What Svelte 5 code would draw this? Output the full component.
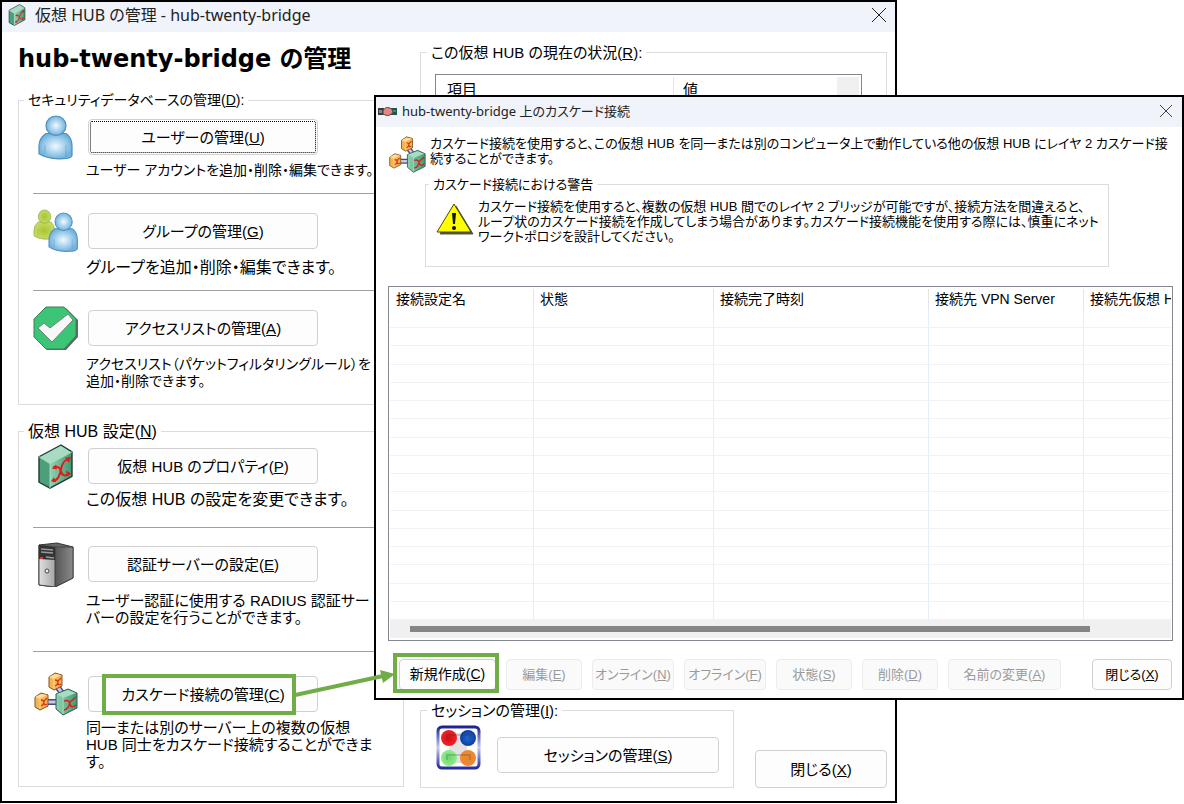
<script>
    // label + access key (underlined) for every button
    const security = [
        { icon: "user", label: "ユーザーの管理", key: "U", focus: true, lines: ["ユーザー アカウントを追加・削除・編集できます。"] },
        { icon: "group", label: "グループの管理", key: "G", lines: ["グループを追加・削除・編集できます。"] },
        { icon: "check", label: "アクセスリストの管理", key: "A", lines: ["アクセスリスト（パケットフィルタリングルール）を", "追加・削除できます。"] },
    ];

    const settings = [
        { icon: "hub", label: "仮想 HUB のプロパティ", key: "P", lines: ["この仮想 HUB の設定を変更できます。"] },
        { icon: "server", label: "認証サーバーの設定", key: "E", lines: ["ユーザー認証に使用する RADIUS 認証サー", "バーの設定を行うことができます。"] },
        { icon: "cascade", label: "カスケード接続の管理", key: "C", marked: true, lines: ["同一または別のサーバー上の複数の仮想", "HUB 同士をカスケード接続することができま", "す。"] },
    ];

    const columns = ["接続設定名", "状態", "接続完了時刻", "接続先 VPN Server", "接続先仮想 HUB"];
    const rows = Array(17).fill(0);

    const actions = [
        { label: "編集", key: "E", size: "small" },
        { label: "オンライン", key: "N", size: "medium" },
        { label: "オフライン", key: "F", size: "medium" },
        { label: "状態", key: "S", size: "small" },
        { label: "削除", key: "D", size: "small" },
        { label: "名前の変更", key: "A", size: "large" },
    ];
</script>

{#snippet accel(label, key)}{label}(<u>{key}</u>){/snippet}

{#snippet cube(fill, top, side)}
    <g stroke-linejoin="round">
        <path d="M0 12 22 0 33 7 11 19Z" fill={top} />
        <path d="M0 12 11 19V44L0 38Z" fill={side} />
        <path d="M11 19 33 7V32L11 44Z" fill={fill} />
        <path d="M0 12 22 0 33 7V32L11 44 0 38Z" fill="none" stroke="#1d3b31" stroke-width="1.4" />
        <path d="M0 12 11 19 33 7M11 19V44" fill="none" stroke="#a9d8c1" stroke-width="1" />
        <path d="M14 23Q20 20 22 27T31 29M14 37Q20 36 22 25T30 15" fill="none" stroke="#e3191c" stroke-width="2" />
        <path d="M26 13 32 12 30 18ZM27 26 32 29 28 32ZM13 24 17 20 18 25ZM12 37 15 33 17 38Z" fill="#e3191c" />
    </g>
{/snippet}

{#snippet person(fill, line)}
    <g {fill} stroke={line} stroke-width="1.2">
        <path d="M7 18Q0 23 0 31V39Q9 45 24 44 31 44 33 41V31Q33 22 27 18Z" />
        <circle cx="17" cy="10" r="10" />
        <path d="M6 30V39M27 30V42" fill="none" opacity=".4" />
    </g>
{/snippet}

{#snippet orangeNode()}
    <g stroke-linejoin="round">
        <path d="M1 4 7 0 14 2V13L6 17 1 14Z" fill="#f8b44e" stroke="#7a5424" />
        <path d="M1 4 7 1 13 2 6 6Z" fill="#ffdc9a" />
        <path d="M6 6V16" stroke="#fbd795" />
        <path d="M7 7Q10 7 10 10T13 11M7 13Q10 12 10 8L13 5" fill="none" stroke="#d9341c" stroke-width="1.3" />
    </g>
{/snippet}

{#snippet icon(name)}
    <svg class="icon" viewBox="0 0 45 45" aria-hidden="true">
        {#if name === "user"}
            <g transform="translate(6 1) scale(1 .97)">{@render person("url(#blue)", "#4f8fb9")}</g>
        {:else if name === "group"}
            <g transform="translate(1 1) scale(.62 .66)">{@render person("url(#lime)", "#93ad39")}</g>
            <g transform="translate(16 4) scale(.86 .87)">{@render person("url(#blue)", "#4f8fb9")}</g>
        {:else if name === "check"}
            <path d="M14 2H33L45 14V31L33 44H14L3 32V13Z" fill="#666" />
            <path d="M13 1H31L43 13V30L31 43H13L1 31V13Z" fill="#3dc577" stroke="#3e7d5b" />
            <path d="M5 22 11 17 17 22 35 8 40 14 19 36Z" fill="#f7f7f7" stroke="#6a8577" />
        {:else if name === "hub"}
            <g transform="translate(6 1) scale(1 .98)">{@render cube("url(#green)", "#a8dcc2", "#4c9f7b")}</g>
        {:else if name === "server"}
            <path d="M6 3 24 1 40 5V36L22 45 6 43Z" fill="#666" stroke="#333" />
            <path d="M22 5 40 5V36L22 45Z" fill="url(#dark)" stroke="#444" />
            <path d="M6 3 22 5V45L6 43Z" fill="url(#steel)" stroke="#444" />
            <path d="M6 3 22 5V18L6 17Z" fill="#333" />
            <path d="M8 7 20 8M8 10 20 11M13 15 21 16" stroke="#999" stroke-width="1.3" />
            <path d="M7 16H10" stroke="#d33" stroke-width="2" />
            <circle cx="14" cy="29" r="2" fill="#eee" stroke="#444" />
        {:else if name === "cascade"}
            <path d="M23 13 32 25M14 30H26" stroke="#494982" stroke-width="6" />
            <path d="M23 13 32 25M14 30H26" stroke="#c7c8e8" stroke-width="3" />
            <g transform="translate(15 1)">{@render orangeNode()}</g>
            <g transform="translate(1 21)">{@render orangeNode()}</g>
            <path d="M23 22 35 17 44 21V36L30 43 23 37Z" fill="url(#green)" stroke="#2c5d48" stroke-linejoin="round" />
            <path d="M24 22 35 18 43 21 30 26Z" fill="#a8dcc2" />
            <path d="M30 26V42" stroke="#a8dcc2" />
            <path d="M31 29Q36 27 37 32T43 33M31 38Q36 37 37 30L43 25" fill="none" stroke="#d2231c" stroke-width="1.6" />
        {:else if name === "session"}
            <rect x="2" y="2" width="41" height="41" rx="4" fill="#fff" stroke="url(#navy)" stroke-width="3" />
            <path d="M13 8H31V38H13Z" fill="#e2e2e2" />
            <circle cx="13" cy="13" r="8" fill="url(#red)" />
            <circle cx="32" cy="13" r="8" fill="url(#ball)" />
            <circle cx="13" cy="33" r="8" fill="url(#leaf)" />
            <circle cx="32" cy="33" r="8" fill="url(#orange)" />
            <path d="M11 15V10H34V15M11 35V30H34V35" fill="none" stroke="#333" stroke-opacity=".2" stroke-width="2" />
        {/if}
    </svg>
{/snippet}

{#snippet item(it)}
    <div class={["item", it.icon]}>
        {@render icon(it.icon)}
        <span class="holder">
            <button class="btn" class:focus={it.focus}>{@render accel(it.label, it.key)}</button>
            {#if it.marked}<span class="mark"></span>{/if}
        </span>
        <p>{#each it.lines as line, i}{#if i}<br />{/if}{line}{/each}</p>
    </div>
{/snippet}

<svg class="defs" width="0" height="0" aria-hidden="true">
    <defs>
        <radialGradient id="blue"><stop offset="0" stop-color="#f0f9ff" /><stop offset="1" stop-color="#72b4df" /></radialGradient>
        <radialGradient id="lime"><stop offset="0" stop-color="#a9c52e" /><stop offset="1" stop-color="#c5db68" /></radialGradient>
        <radialGradient id="red"><stop offset="0" stop-color="#c11" /><stop offset="1" stop-color="#f4202a" /></radialGradient>
        <radialGradient id="ball"><stop offset="0" stop-color="#1b6ad6" /><stop offset="1" stop-color="#123c9c" /></radialGradient>
        <radialGradient id="leaf"><stop offset="0" stop-color="#6fd56b" /><stop offset="1" stop-color="#8fee8b" /></radialGradient>
        <radialGradient id="orange"><stop offset="0" stop-color="#e08a2c" /><stop offset="1" stop-color="#f58634" /></radialGradient>
        <linearGradient id="green"><stop offset="0" stop-color="#8fd3b3" /><stop offset="1" stop-color="#3f9871" /></linearGradient>
        <linearGradient id="dark"><stop offset="0" stop-color="#555" /><stop offset="1" stop-color="#8a8a8a" /></linearGradient>
        <linearGradient id="steel"><stop offset="0" stop-color="#e0e0e0" /><stop offset="1" stop-color="#a5a5a5" /></linearGradient>
        <linearGradient id="navy" x2="0" y2="1"><stop offset="0" stop-color="#1c2290" /><stop offset=".5" stop-color="#c6cbf2" /><stop offset="1" stop-color="#262c9c" /></linearGradient>
    </defs>
</svg>

<div class="desktop">
    <main class="window manager">
        <header class="titlebar">
            <svg class="hub-small" viewBox="-1 -1 35 46" aria-hidden="true">{@render cube("url(#green)", "#a8dcc2", "#4c9f7b")}</svg>
            <span class="caption">仮想 HUB の管理 - hub-twenty-bridge</span>
            <button class="close" aria-label="閉じる">
                <svg viewBox="0 0 14 14"><path d="M0 0 14 14M14 0 0 14" /></svg>
            </button>
        </header>

        <div class="content">
            <div class="left">
                <h1>hub-twenty-bridge の管理</h1>
                <fieldset class="security">
                    <legend>{@render accel("セキュリティデータベースの管理", "D")}:</legend>
                    {#each security as it}{@render item(it)}{/each}
                </fieldset>
                <fieldset class="settings">
                    <legend>{@render accel("仮想 HUB 設定", "N")}</legend>
                    {#each settings as it}{@render item(it)}{/each}
                </fieldset>
            </div>

            <div class="right">
                <fieldset class="status">
                    <legend>{@render accel("この仮想 HUB の現在の状況", "R")}:</legend>
                    <div class="status-list">
                        <table>
                            <thead><tr><th>項目</th><th>値</th></tr></thead>
                        </table>
                        <div class="vbar"></div>
                    </div>
                </fieldset>
                <div class="bottom">
                    <fieldset class="session">
                        <legend>{@render accel("セッションの管理", "I")}:</legend>
                        {@render icon("session")}
                        <button class="btn">{@render accel("セッションの管理", "S")}</button>
                    </fieldset>
                    <button class="btn exit">{@render accel("閉じる", "X")}</button>
                </div>
            </div>
        </div>
    </main>

    <section class="window dialog">
        <header class="titlebar">
            <svg class="link-small" viewBox="0 0 19 9" aria-hidden="true">
                <path d="M0 1H6V8H0Z" fill="#3b3b3b" />
                <path d="M13 1H19V8H13Z" fill="#155b50" />
                <path d="M1 3H4V6H1Z" fill="#7d8a92" />
                <path d="M5 3 9 0 14 2 15 6 10 9 5 7Z" fill="#d98c86" stroke="#7f3434" />
                <path d="M15 3H18V5H15Z" fill="#1f9d74" />
            </svg>
            <span class="caption">hub-twenty-bridge 上のカスケード接続</span>
            <button class="close" aria-label="閉じる">
                <svg viewBox="0 0 14 14"><path d="M0 0 14 14M14 0 0 14" /></svg>
            </button>
        </header>

        <div class="intro">
            {@render icon("cascade")}
            <p>カスケード接続を使用すると、この仮想 HUB を同一または別のコンピュータ上で動作している他の仮想 HUB にレイヤ 2 カスケード接<br />続することができます。</p>
        </div>

        <fieldset class="warning">
            <legend>カスケード接続における警告</legend>
            <svg viewBox="0 0 38 32" aria-hidden="true">
                <path d="M20 3 37 31H4Z" fill="#555" stroke="#555" stroke-width="1" stroke-linejoin="round" />
                <path d="M18 1 35 29H1Z" fill="#ff0" stroke="#4a4a00" stroke-linejoin="round" />
                <path d="M16 10H20L19 21H17Z" fill="#111" />
                <circle cx="18" cy="25" r="2" fill="#111" />
            </svg>
            <p>カスケード接続を使用すると、複数の仮想 HUB 間でのレイヤ 2 ブリッジが可能ですが、接続方法を間違えると、<br />ループ状のカスケード接続を作成してしまう場合があります。カスケード接続機能を使用する際には、慎重にネット<br />ワークトポロジを設計してください。</p>
        </fieldset>

        <div class="list">
            <table>
                <colgroup><col class="c1" /><col class="c2" /><col class="c3" /><col class="c4" /><col /></colgroup>
                <thead><tr>{#each columns as c}<th>{c}</th>{/each}</tr></thead>
                <tbody>
                    {#each rows as _}
                        <tr>{#each columns as _c}<td></td>{/each}</tr>
                    {/each}
                </tbody>
            </table>
            <div class="hbar"><div class="thumb"></div></div>
        </div>

        <footer>
            <span class="holder">
                <button class="btn create">{@render accel("新規作成", "C")}</button>
                <span class="mark"></span>
            </span>
            {#each actions as a}
                <button class={["btn", a.size]} disabled>{@render accel(a.label, a.key)}</button>
            {/each}
            <button class="btn last">{@render accel("閉じる", "X")}</button>
        </footer>
    </section>

    <svg class="arrow" width="100" height="30" viewBox="0 0 100 30" aria-hidden="true">
        <path d="M0 26 88 7" stroke="#70ad47" stroke-width="4" />
        <path d="M85 1 100 5 88 14Z" fill="#70ad47" />
    </svg>
</div>

<style>
    :global(body) {
        background: #fff;
    }

    .desktop {
        position: relative;
        min-height: 804px;
        overflow: hidden;
        color: #000;
        font-family: "Liberation Sans", "Noto Sans CJK JP", sans-serif;
        font-size: 15px;
        line-height: 17px;
        font-feature-settings: "palt";
    }

    .defs {
        position: absolute;
    }

    .window {
        position: absolute;
        box-sizing: border-box;
        background: #fff;
        border: 2px solid #000;
        display: flex;
        flex-direction: column;
    }

    .manager {
        inset: 0 287px 1px 0;
    }

    .dialog {
        top: 95px;
        left: 374px;
        right: 0;
        font-size: 13px;
        line-height: 15px;
    }

    .titlebar {
        box-sizing: border-box;
        display: flex;
        align-items: center;
        height: 30px;
        padding: 0 9px 4px 6px;
        background: #f0f3fa;
        color: #222;
        font-family: "Noto Sans", "Noto Sans CJK JP", sans-serif;
        font-size: 16px;
        white-space: nowrap;
    }

    .caption {
        flex: 1;
    }

    .hub-small {
        width: 18px;
        height: 22px;
        margin-right: 9px;
    }

    .link-small {
        width: 19px;
        height: 9px;
        margin-right: 5px;
    }

    .dialog .titlebar {
        padding: 0 10px 2px 2px;
        font-size: 13px;
    }

    .close {
        border: 0;
        padding: 0;
        background: none;
        display: flex;
    }

    .close svg {
        width: 14px;
        height: 14px;
        fill: none;
        stroke: #222;
    }

    .dialog .close svg {
        width: 12px;
        height: 12px;
    }

    .content {
        flex: 1;
        display: flex;
        gap: 16px;
        padding: 11px 8px 13px 16px;
    }

    .left {
        flex: none;
        width: 386px;
        white-space: nowrap;
    }

    h1 {
        margin: 0 0 17px;
        font-family: "DejaVu Sans", "Noto Sans CJK JP", sans-serif;
        font-size: 24px;
        line-height: 32px;
    }

    fieldset {
        box-sizing: border-box;
        margin: 0;
        padding: 0;
        border: 1px solid #dcdcdc;
        min-width: 0;
    }

    legend {
        margin-left: 6px;
        padding: 0 4px;
    }

    .left fieldset {
        padding-left: 14px;
    }

    .left fieldset + fieldset {
        margin-top: 18px;
    }

    .left legend,
    .session legend {
        margin-left: -9px;
    }

    .security legend {
        font-size: 14px;
    }

    .settings legend {
        font-size: 16px;
    }

    .item {
        display: grid;
        grid-template-columns: 45px auto;
        column-gap: 10px;
        align-items: center;
        padding: 19px 0 14px;
        border-top: 1px solid #a0a0a0;
    }

    .item.user {
        padding-top: 10px;
        border-top: 0;
    }

    .item.hub {
        padding: 8px 0 19px;
        border-top: 0;
    }

    .item.server {
        padding: 18px 0 25px;
    }

    .item.cascade {
        padding: 24px 0 16px;
    }

    .item p {
        grid-column: 2;
        margin: 10px 0 0 -2px;
    }

    .item.user p,
    .item.hub p,
    .item.cascade p {
        margin-top: 7px;
    }

    .item.user p,
    .item.check p {
        font-size: 14px;
    }

    .item.group p,
    .item.hub p {
        font-size: 16px;
    }

    .icon {
        flex: none;
        width: 45px;
        height: 45px;
        margin: -5px 0;
    }

    .holder {
        position: relative;
        display: flex;
    }

    .btn {
        box-sizing: border-box;
        height: 36px;
        padding: 0;
        border: 1px solid #d0d0d0;
        border-radius: 4px;
        background: #fdfdfd;
        color: #000;
        font: inherit;
        font-feature-settings: inherit;
        white-space: nowrap;
    }

    .item .btn {
        width: 230px;
    }

    .btn.focus {
        outline: 1px dotted #000;
        outline-offset: -3px;
    }

    .mark {
        position: absolute;
        box-sizing: border-box;
        border: 4px solid #70ad47;
        pointer-events: none;
    }

    .item .mark {
        left: 14px;
        top: -2px;
        width: 194px;
        height: 41px;
    }

    .right {
        flex: 1;
        display: flex;
        flex-direction: column;
        gap: 14px;
        padding-top: 1px;
    }

    .status {
        flex: 1;
    }

    .status-list {
        display: flex;
        height: 498px;
        margin: 13px 24px 0 14px;
        padding: 2px;
        border: 1px solid #828790;
    }

    .status-list table {
        flex: 1;
        border-collapse: collapse;
        height: 24px;
    }

    .status-list th {
        padding: 0 9px;
        font-weight: normal;
        text-align: left;
    }

    .status-list th:first-child {
        width: 59%;
        border-right: 1px solid #e5e5e5;
    }

    .vbar {
        width: 22px;
        background: #f0f0f0;
    }

    .bottom {
        display: flex;
        align-items: flex-end;
        gap: 21px;
    }

    .session {
        flex: 1;
        display: flex;
        align-items: flex-end;
        gap: 16px;
        padding: 6px 14px 14px 15px;
    }

    .session .icon {
        margin: 0 0 3px;
    }

    .session .btn {
        flex: 1;
    }

    .exit {
        width: 132px;
        height: 38px;
    }

    .intro {
        display: flex;
        gap: 4px;
        padding: 9px 13px 0 12px;
        white-space: nowrap;
    }

    .intro .icon {
        width: 38px;
        height: 38px;
        margin: 0;
    }

    .intro p {
        margin: 0;
    }

    .warning {
        display: flex;
        gap: 4px;
        margin: 3px 73px 0 49px;
        padding: 7px 10px 22px;
        white-space: nowrap;
    }

    .warning legend {
        margin-left: -7px;
    }

    .warning svg {
        flex: none;
        width: 38px;
        height: 32px;
        margin-top: 4px;
    }

    .warning p {
        margin: 0;
    }

    .list {
        margin: 19px 9px 0 12px;
        padding: 2px 1px;
        border: 1px solid #828790;
        overflow: hidden;
    }

    .list table {
        width: 100%;
        height: 331px;
        table-layout: fixed;
        border-collapse: separate;
        border-spacing: 0;
    }

    .c1 {
        width: 144px;
    }

    .c2 {
        width: 180px;
    }

    .c3 {
        width: 215px;
    }

    .c4 {
        width: 155px;
    }

    .list th {
        height: 21px;
        padding: 0 0 0 6px;
        border-right: 1px solid #e5e5e5;
        font-size: 14px;
        font-weight: normal;
        text-align: left;
        white-space: nowrap;
        overflow: hidden;
    }

    .list td {
        box-sizing: border-box;
        height: 18px;
        padding: 0;
        border-right: 1px solid #e6eff7;
        border-bottom: 1px solid #f2f2f2;
    }

    .list tr > :last-child {
        border-right: 0;
    }

    .hbar {
        height: 18px;
        padding: 0 81px 0 20px;
        display: flex;
        align-items: center;
        background: #f0f0f0;
    }

    .thumb {
        flex: 1;
        height: 6px;
        background: #858585;
    }

    footer {
        display: flex;
        gap: 10px;
        padding: 18px 10px 8px 23px;
    }

    footer .btn {
        flex: none;
        height: 31px;
    }

    footer .btn:disabled {
        border-color: #ececec;
        background: #fafafa;
        color: #9a9a9a;
    }

    footer .small {
        width: 76px;
    }

    footer .medium {
        width: 82px;
    }

    footer .large {
        width: 113px;
    }

    footer .create {
        width: 97px;
        font-size: 14px;
    }

    footer .last {
        width: 80px;
        margin-left: auto;
    }

    footer .mark {
        inset: -6px -3px -3px -6px;
    }

    .arrow {
        position: absolute;
        left: 295px;
        top: 669px;
    }
</style>
